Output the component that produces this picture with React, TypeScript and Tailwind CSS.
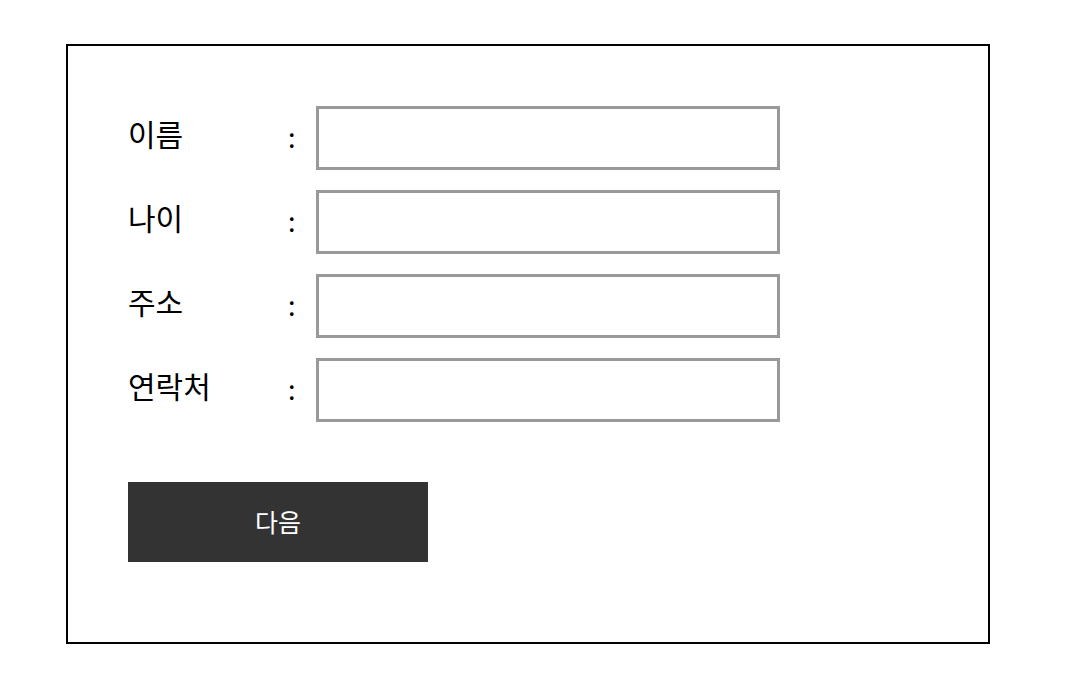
export default function App() {
  const fields = ["이름", "나이", "주소", "연락처"]

  return (
    <div className="min-h-screen bg-white pt-[44px] pl-[66px] font-['Noto_Sans_CJK_KR','Noto_Sans',sans-serif] text-black">
      <div className="w-[924px] h-[600px] border-2 border-black pt-[60px] pl-[60px]">
        {/* 입력 폼 */}
        <div className="flex flex-col gap-5">
          {fields.map((label) => (
            <div key={label} className="flex items-center h-16">
              <span className="w-[160px] pb-[10px] text-[30px] leading-none">{label}</span>
              <span className="w-[28px] pb-[4px] text-[27px] leading-none">:</span>
              <input
                type="text"
                className="w-[464px] h-16 border-[3px] border-[#999999] bg-white outline-none"
              />
            </div>
          ))}
        </div>

        <button className="mt-[60px] w-[300px] h-20 pb-[2px] bg-[#333333] text-white text-[25px] leading-none">
          다음
        </button>
      </div>
    </div>
  )
}
